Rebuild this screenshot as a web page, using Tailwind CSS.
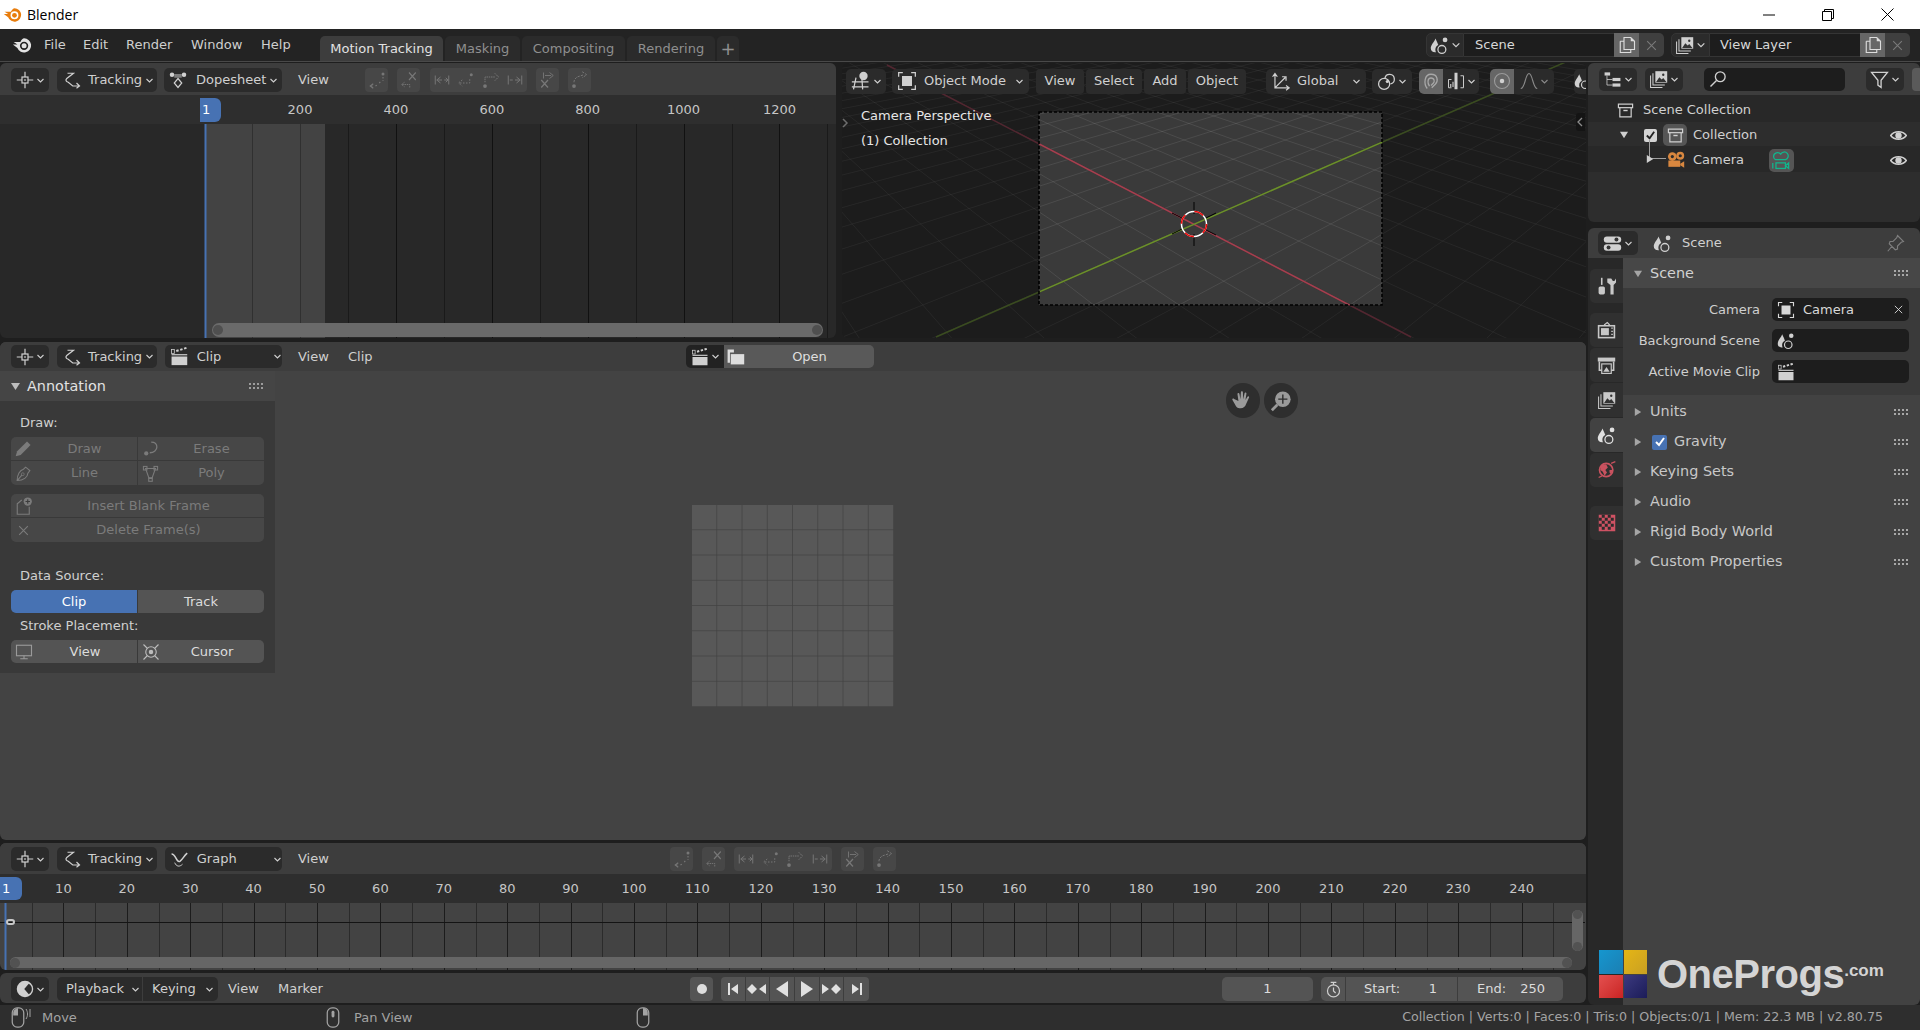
<!DOCTYPE html>
<html lang="en">
<head>
  <meta charset="UTF-8" />
  <title>Blender</title>
  <script src="https://cdn.jsdelivr.net/npm/@tailwindcss/browser@4"></script>
</head>
<body class="w-[1920px] h-[1030px] overflow-hidden flex flex-col bg-[#1e1e1e] text-[#d0d0d0] text-[13px] font-['DejaVu_Sans',sans-serif]">

  <!-- icon sheet -->
  <svg class="hidden" xmlns="http://www.w3.org/2000/svg">
    <symbol id="chev" viewBox="0 0 24 24"><path d="M4 8l8 8 8-8" fill="none" stroke="currentColor" stroke-width="3"/></symbol>
    <symbol id="blender" viewBox="0 0 24 24"><path fill-rule="evenodd" fill="currentColor" d="M14.5 4a8.5 8.5 0 1 1-8 11.5L1 11.5h5.5L2 8.5h8C11.5 5.5 13 4 14.5 4zM14.5 8a5 5 0 1 0 0 10 5 5 0 0 0 0-10z"/><circle cx="14.5" cy="13" r="3" fill="currentColor"/></symbol>
    <symbol id="clip-ed" viewBox="0 0 24 24"><g fill="none" stroke="currentColor" stroke-width="1.6"><rect x="8" y="8" width="8" height="8"/><path d="M12 1v7M12 16v7M1 12h7M16 12h7"/></g><rect x="11" y="11" width="2" height="2" fill="currentColor"/></symbol>
    <symbol id="tracking" viewBox="0 0 24 24"><path d="M6 3h8l-9 7c-2 2-1 4 2 5l6 5h8M18 16l4 4-4 3" fill="none" stroke="currentColor" stroke-width="1.6"/></symbol>
    <symbol id="dope" viewBox="0 0 24 24"><rect x="7" y="4" width="10" height="5" fill="currentColor" opacity=".5"/><circle cx="4" cy="5" r="3" fill="currentColor"/><circle cx="20" cy="5" r="3" fill="currentColor"/><path d="M12 10l5 6-5 6-5-6z" fill="none" stroke="currentColor" stroke-width="1.6"/></symbol>
    <symbol id="clapper" viewBox="0 0 24 24"><rect x="2" y="12" width="20" height="11" fill="currentColor"/><rect x="2" y="9" width="20" height="1.5" fill="currentColor"/><rect x="2" y="3" width="3.5" height="5" fill="none" stroke="currentColor"/><path d="M8 5l3-1M13 3.5l3-1M18 2l3-1" stroke="currentColor" stroke-width="2.5"/></symbol>
    <symbol id="graph" viewBox="0 0 24 24"><path d="M2 5c6 0 6 12 11 9 3-2 5-7 9-10" fill="none" stroke="currentColor" stroke-width="2"/><path d="M6 16c2 5 6 6 10 2" fill="none" stroke="currentColor" stroke-width="1.2"/></symbol>
    <symbol id="scene" viewBox="0 0 24 24"><path d="M7 3C5 8 1 11 1 15.5 1 19 4 21 7.5 20.5 6 17 7 13 10.5 11.5 10 9 8 6 7 3z" fill="currentColor"/><circle cx="19" cy="5" r="3" fill="currentColor"/><circle cx="15" cy="17" r="5" fill="none" stroke="currentColor" stroke-width="1.6"/></symbol>
    <symbol id="layer" viewBox="0 0 24 24"><path d="M2 7v15h15M5 4v15h15" fill="none" stroke="currentColor" stroke-width="1.3"/><rect x="8" y="1.5" width="15" height="14.5" fill="currentColor"/><path d="M9 15l4-6 3 3 2-2 4 5z" fill="#333"/><circle cx="18" cy="6" r="1.5" fill="#333"/></symbol>
    <symbol id="copy" viewBox="0 0 24 24"><path d="M3 7h5M3 7v15h14v-4M8 2v16h14V7l-5-5z" fill="none" stroke="currentColor" stroke-width="1.5"/><path d="M17 2v5h5z" fill="currentColor"/></symbol>
    <symbol id="x" viewBox="0 0 24 24"><path d="M4 4l16 16M20 4L4 20" fill="none" stroke="currentColor" stroke-width="2"/></symbol>
    <symbol id="box" viewBox="0 0 24 24"><g fill="none" stroke="currentColor" stroke-width="1.7"><rect x="2" y="3" width="20" height="5"/><path d="M4 8v13h16V8"/></g><rect x="9" y="11" width="6" height="2" fill="currentColor"/></symbol>
    <symbol id="eye" viewBox="0 0 24 24"><path d="M1 12C6 5 18 5 23 12 18 19 6 19 1 12z" fill="none" stroke="currentColor" stroke-width="2.2"/><circle cx="12" cy="12" r="4.5" fill="currentColor"/></symbol>
    <symbol id="camera" viewBox="0 0 24 24"><circle cx="8" cy="7" r="5.5" fill="currentColor"/><circle cx="18" cy="6" r="5" fill="currentColor"/><circle cx="8" cy="7" r="2" fill="#2b2b2b"/><circle cx="18" cy="6" r="2" fill="#2b2b2b"/><rect x="3" y="12" width="15" height="8" fill="currentColor"/><path d="M18 16l5-3v8l-5-3z" fill="currentColor"/></symbol>
    <symbol id="camera-line" viewBox="0 0 24 24"><g fill="none" stroke="currentColor" stroke-width="1.6"><path d="M2 7a5 5 0 0 1 9-3 5 5 0 1 1 6 7H6C4 11 2 9 2 7z"/><rect x="5" y="15" width="12" height="7"/><path d="M1 15v7M21 15l-4 3.5 4 3.5z"/></g></symbol>
    <symbol id="search" viewBox="0 0 24 24"><circle cx="15" cy="9" r="6.5" fill="none" stroke="currentColor" stroke-width="1.8"/><path d="M10 14l-8 8" stroke="currentColor" stroke-width="2"/></symbol>
    <symbol id="filter" viewBox="0 0 24 24"><path d="M2 3h20l-8 10v9l-4-3v-6z" fill="none" stroke="currentColor" stroke-width="1.7"/></symbol>
    <symbol id="tree" viewBox="0 0 24 24"><rect x="2" y="3" width="7" height="4" fill="currentColor"/><rect x="12" y="10" width="10" height="4" fill="currentColor"/><rect x="12" y="17" width="10" height="4" fill="currentColor"/><path d="M5 7v12h7M5 12h7" fill="none" stroke="currentColor"/></symbol>
    <symbol id="toggles" viewBox="0 0 24 24"><rect x="1" y="3" width="22" height="8" rx="4" fill="currentColor"/><rect x="1" y="13" width="22" height="8" rx="4" fill="currentColor"/><circle cx="17" cy="7" r="2.5" fill="#333"/><circle cx="7" cy="17" r="2.5" fill="#333"/></symbol>
    <symbol id="pin" viewBox="0 0 24 24"><path d="M14 2l8 8-3 1-5 5 0 4-3 1-8-8 1-3h4l5-5zM7 16l-6 7" fill="none" stroke="currentColor" stroke-width="1.5"/></symbol>
    <symbol id="grip" viewBox="0 0 15 7"><g fill="currentColor"><rect x="0" y="0" width="2" height="2"/><rect x="4" y="0" width="2" height="2"/><rect x="8" y="0" width="2" height="2"/><rect x="12" y="0" width="2" height="2"/><rect x="0" y="4" width="2" height="2"/><rect x="4" y="4" width="2" height="2"/><rect x="8" y="4" width="2" height="2"/><rect x="12" y="4" width="2" height="2"/></g></symbol>
    <symbol id="tool" viewBox="0 0 24 24"><path d="M6 1v9" stroke="currentColor" stroke-width="2"/><rect x="2" y="12" width="8" height="10" rx="2" fill="currentColor"/><path d="M13 2v5l4 3v12h4V10l3-3V2l-2 3h-2l-2-3z" fill="currentColor"/></symbol>
    <symbol id="render" viewBox="0 0 24 24"><path d="M9 5l4-3 3 3" fill="none" stroke="currentColor" stroke-width="1.5"/><rect x="2" y="6" width="20" height="15" fill="none" stroke="currentColor" stroke-width="2"/><rect x="5" y="9" width="10" height="9" fill="currentColor"/><path d="M18 9h2M18 13h2M18 17h2" stroke="currentColor" stroke-width="1.5"/></symbol>
    <symbol id="output" viewBox="0 0 24 24"><rect x="1" y="2" width="22" height="5" fill="currentColor"/><path d="M3 7v11h3M21 7v11h-3" fill="none" stroke="currentColor" stroke-width="2"/><rect x="6" y="10" width="12" height="12" fill="none" stroke="currentColor" stroke-width="1.5"/><path d="M8 20l4-6 4 6z" fill="currentColor"/></symbol>
    <symbol id="world" viewBox="0 0 24 24"><circle cx="11" cy="12" r="8" fill="none" stroke="currentColor" stroke-width="2"/><path d="M5 6l6-1 2 4-3 3 2 3-3 4-2-5-3-2zM15 12h4l-2 5-2-2z" fill="currentColor"/><path d="M2 21l4-2M17 4l5-2" fill="none" stroke="currentColor" stroke-width="1.5"/></symbol>
    <symbol id="checker" viewBox="0 0 24 24"><rect x="1" y="1" width="22" height="22" fill="currentColor"/><g fill="#2c2c2c"><rect x="5" y="1" width="4" height="4"/><rect x="13" y="1" width="4" height="4"/><rect x="1" y="5" width="4" height="4"/><rect x="9" y="5" width="4" height="4"/><rect x="17" y="5" width="4" height="4"/><rect x="5" y="9" width="4" height="4"/><rect x="13" y="9" width="4" height="4"/><rect x="1" y="13" width="4" height="4"/><rect x="9" y="13" width="4" height="4"/><rect x="17" y="13" width="4" height="4"/><rect x="5" y="17" width="4" height="4"/><rect x="13" y="17" width="4" height="4"/></g></symbol>
    <symbol id="obj" viewBox="0 0 24 24"><rect x="6" y="6" width="12" height="12" fill="currentColor"/><path d="M2 7V2h5M17 2h5v5M22 17v5h-5M7 22H2v-5" fill="none" stroke="currentColor" stroke-width="1.5"/></symbol>
    <symbol id="view3d" viewBox="0 0 24 24"><path d="M6 8L3 22M13 8l1 14M1 13h20M1 19h20" fill="none" stroke="currentColor" stroke-width="1.5"/><circle cx="15" cy="6" r="5" fill="currentColor"/></symbol>
    <symbol id="axes" viewBox="0 0 24 24"><path d="M5 3v17h17M5 20L18 7M2 6l3-4 3 4M19 17l4 3-4 3M14 6l5 0v5" fill="none" stroke="currentColor" stroke-width="1.5"/></symbol>
    <symbol id="link" viewBox="0 0 24 24"><circle cx="9" cy="15" r="7" fill="none" stroke="currentColor" stroke-width="1.6"/><path d="M10 8a6 6 0 1 1 7 7" fill="none" stroke="currentColor" stroke-width="1.6"/><circle cx="13" cy="12" r="2" fill="currentColor"/></symbol>
    <symbol id="magnet" viewBox="0 0 24 24"><path d="M7 22C2 16 3 3 12 3s10 9 6 13l-5 5M10 19c-3-4-3-11 2-11s5 5 3 7l-3 3" fill="none" stroke="currentColor" stroke-width="1.7"/></symbol>
    <symbol id="snap" viewBox="0 0 24 24"><path d="M6 10H2v11h4M18 5h4v16h-4" fill="none" stroke="currentColor" stroke-width="1.3"/><rect x="10" y="1" width="4" height="22" fill="currentColor"/><path d="M5 20v-4M8 20v-7" stroke="currentColor" stroke-width="1.5"/></symbol>
    <symbol id="prop" viewBox="0 0 24 24"><circle cx="12" cy="12" r="10" fill="none" stroke="currentColor" opacity=".5" stroke-width="1.5"/><circle cx="12" cy="12" r="3" fill="currentColor"/></symbol>
    <symbol id="falloff" viewBox="0 0 24 24"><path d="M1 22c6 0 6-20 11-20s5 20 11 20" fill="none" stroke="currentColor" stroke-width="1.5"/></symbol>
    <symbol id="pencil" viewBox="0 0 24 24"><path d="M17 2l5 5L8 21l-7 2 2-7z" fill="currentColor"/></symbol>
    <symbol id="erase" viewBox="0 0 24 24"><path d="M13 3c5 0 8 3 8 7s-4 8-10 8" fill="none" stroke="currentColor" stroke-width="1.8"/><circle cx="6" cy="19" r="3" fill="currentColor"/></symbol>
    <symbol id="nib" viewBox="0 0 24 24"><path d="M15 3l6 5-3 4c0 5-6 10-15 10C3 14 7 7 12 6zM3 22l7-8" fill="none" stroke="currentColor" stroke-width="1.5"/><circle cx="11" cy="13" r="2" fill="none" stroke="currentColor"/></symbol>
    <symbol id="poly" viewBox="0 0 24 24"><path d="M5 5h14l-5 14h-4z" fill="none" stroke="currentColor" stroke-width="1.5"/><g fill="none" stroke="currentColor" stroke-width="1.5"><rect x="2" y="2" width="5" height="5"/><rect x="17" y="2" width="5" height="5"/><rect x="9.5" y="18" width="5" height="5"/></g></symbol>
    <symbol id="blank" viewBox="0 0 24 24"><path d="M9 4l-6 5v14h16V13" fill="none" stroke="currentColor" stroke-width="1.5"/><circle cx="17" cy="6" r="5.5" fill="currentColor"/><path d="M17 3v6M14 6h6" stroke="#3c3c3c" stroke-width="1.5"/></symbol>
    <symbol id="monitor" viewBox="0 0 24 24"><rect x="2" y="3" width="20" height="14" fill="none" stroke="currentColor" stroke-width="1.5"/><path d="M7 21h10M12 17v4" stroke="currentColor" stroke-width="1.5"/></symbol>
    <symbol id="cursor3d" viewBox="0 0 24 24"><circle cx="12" cy="12" r="7" fill="none" stroke="currentColor" stroke-width="1.5"/><circle cx="12" cy="12" r="3" fill="currentColor"/><path d="M2 2l5 5M22 2l-5 5M2 22l5-5M22 22l-5-5" stroke="currentColor" stroke-width="1.5"/></symbol>
    <symbol id="t-back" viewBox="0 0 24 24"><g stroke="currentColor" fill="none" stroke-width="1.5"><path d="M7 17l-4 3 4 3" /><path d="M4 20h3M10 20l3-2M15 16l2-2" stroke-dasharray="2 2"/></g><circle cx="20" cy="4" r="2" fill="currentColor"/><path d="M20 8v5" stroke="currentColor" stroke-width="1.5" stroke-dasharray="2 2"/></symbol>
    <symbol id="t-xback" viewBox="0 0 24 24"><path d="M12 2l9 10M21 2l-9 10" stroke="currentColor" stroke-width="1.5"/><path d="M6 15l-4 3 4 3M3 18h10v5" fill="none" stroke="currentColor" stroke-width="1.2" stroke-dasharray="2 1"/></symbol>
    <symbol id="t-first" viewBox="0 0 24 24"><path d="M3 6v12M10 8l-5 4 5 4M6 12h6M15 12h4M21 6v12M17 9l3 3-3 3" fill="none" stroke="currentColor" stroke-width="1.3"/></symbol>
    <symbol id="t-prev" viewBox="0 0 24 24"><path d="M7 12l-5 4 5 4M4 16h13v-7" fill="none" stroke="currentColor" stroke-width="1.3" stroke-dasharray="2 2"/><circle cx="19" cy="5" r="2" fill="currentColor"/></symbol>
    <symbol id="t-next" viewBox="0 0 24 24"><circle cx="4" cy="20" r="2.5" fill="currentColor"/><path d="M4 15V8h14M17 3l5 5-5 5" fill="none" stroke="currentColor" stroke-width="1.3" stroke-dasharray="2 1"/></symbol>
    <symbol id="t-last" viewBox="0 0 24 24"><path d="M21 6v12M14 8l5 4-5 4M18 12H12M9 12H5M3 6v12" fill="none" stroke="currentColor" stroke-width="1.3"/></symbol>
    <symbol id="t-xfwd" viewBox="0 0 24 24"><path d="M3 12l9 10M12 12L3 22" stroke="currentColor" stroke-width="1.7"/><path d="M6 2v8M8 6h8M14 2l5 4-5 4" fill="none" stroke="currentColor" stroke-width="1.2"/></symbol>
    <symbol id="t-fwd" viewBox="0 0 24 24"><circle cx="4" cy="20" r="2.5" fill="currentColor"/><path d="M4 15c0-4 3-7 7-8l6-2M15 1l6 4-6 4" fill="none" stroke="currentColor" stroke-width="1.3" stroke-dasharray="3 1.5"/></symbol>
    <symbol id="clock" viewBox="0 0 24 24"><path fill-rule="evenodd" fill="currentColor" d="M12 1a11 11 0 1 0 0 22 11 11 0 0 0 0-22zM17 5l-6 7 6 7a8 8 0 0 0 0-14z"/></symbol>
    <symbol id="watch" viewBox="0 0 24 24"><circle cx="12" cy="14" r="8.5" fill="none" stroke="currentColor" stroke-width="1.7"/><path d="M8 2h8M12 2v4M12 9v5l3 3" fill="none" stroke="currentColor" stroke-width="1.7"/></symbol>
    <symbol id="folder" viewBox="0 0 24 24"><path d="M2 3h8v4h-8zM2 7v13h3V7" fill="currentColor"/><rect x="6" y="9" width="17" height="13" fill="currentColor"/></symbol>
    <symbol id="hand" viewBox="0 0 24 24"><path d="M7 12L6 4.500c0-1.500 2-1.500 2.200 0l1 5.500.5-7.500c0-1.500 2.200-1.500 2.200 0l.4 7.500 1.400-6.500c.3-1.500 2.300-1 2 .5l-1 7 2-3.500c.8-1.300 2.500-.3 1.800 1l-3 6.500c-1 3-3 5-6 5-4 0-5-2-6-4l-3-5c-.7-1.200.8-2.500 1.800-1.300z" fill="currentColor"/></symbol>
    <symbol id="zoomin" viewBox="0 0 24 24"><circle cx="14" cy="10" r="8.5" fill="currentColor"/><path d="M8 16l-6 6" stroke="currentColor" stroke-width="3"/><path d="M14 5v10M9 10h10" stroke="#2c2c2c" stroke-width="1.5"/></symbol>
    <symbol id="mouse-l" viewBox="0 0 14 24"><rect x="1" y="2" width="12" height="20" rx="5" fill="none" stroke="currentColor" stroke-width="1.3"/><path d="M2 7c0-3 2-4 5-5v8H2z" fill="currentColor"/></symbol>
    <symbol id="mouse-m" viewBox="0 0 14 24"><rect x="1" y="2" width="12" height="20" rx="5" fill="none" stroke="currentColor" stroke-width="1.3"/><rect x="5.5" y="5" width="3" height="7" rx="1.5" fill="currentColor"/></symbol>
    <symbol id="mouse-r" viewBox="0 0 14 24"><rect x="1" y="2" width="12" height="20" rx="5" fill="none" stroke="currentColor" stroke-width="1.3"/><path d="M7 2c3 0 5 2 5 5v3H7z" fill="currentColor"/></symbol>
  </svg>

  <!-- window title -->
  <div class="h-[29px] shrink-0 bg-white flex items-center text-black font-['Open_Sans',sans-serif] text-[14px]">
    <svg class="w-[19px] h-[19px] ml-[3px] text-[#e87d0d]"><use href="#blender"/></svg>
    <span class="ml-[5px]">Blender</span>
    <div class="ml-auto flex items-center">
      <svg class="w-[12px] h-[12px] mr-[47px]" viewBox="0 0 12 12"><path d="M0 6h12" stroke="#000"/></svg>
      <svg class="w-[12px] h-[12px] mr-[47px]" viewBox="0 0 12 12"><path d="M.5 2.5h9v9h-9zM2.5 2.5v-2h9v9h-2" fill="none" stroke="#000"/></svg>
      <svg class="w-[13px] h-[13px] mr-[26px]" viewBox="0 0 13 13"><path d="M.5.5l12 12M12.5.5l-12 12" stroke="#000"/></svg>
    </div>
  </div>

  <!-- top bar -->
  <div class="h-[33px] shrink-0 bg-[#232323] border-b border-[#494949] flex text-[#cfcfcf]">
    <div class="w-[37px] flex items-center justify-center pl-[6px]"><svg class="w-[20px] h-[20px] text-[#e4e4e4]"><use href="#blender"/></svg></div>
    <div class="w-[7px]"></div>
    <div class="flex items-center">
      <span class="w-[39px]">File</span><span class="w-[43px]">Edit</span><span class="w-[65px]">Render</span><span class="w-[70px]">Window</span><span class="w-[59px]">Help</span>
    </div>
    <div class="flex items-end gap-[2px]">
      <div class="w-[123px] h-[25px] rounded-t-[5px] bg-[#3d3d3d] text-[#e2e2e2] flex items-center justify-center">Motion Tracking</div>
      <div class="w-[75px] h-[25px] rounded-t-[5px] bg-[#2b2b2b] text-[#8f8f8f] flex items-center justify-center">Masking</div>
      <div class="w-[103px] h-[25px] rounded-t-[5px] bg-[#2b2b2b] text-[#8f8f8f] flex items-center justify-center">Compositing</div>
      <div class="w-[88px] h-[25px] rounded-t-[5px] bg-[#2b2b2b] text-[#8f8f8f] flex items-center justify-center">Rendering</div>
      <div class="w-[22px] h-[25px] rounded-t-[5px] bg-[#2b2b2b] text-[#8f8f8f] text-[18px] flex items-center justify-center">+</div>
    </div>
    <div class="flex items-start pt-[4px] ml-[687px]">
      <div class="w-[38px] h-[24px] rounded-l-[5px] bg-[#2b2b2b] border border-[#353535] flex items-center justify-center gap-[2px]"><svg class="w-[19px] h-[19px]"><use href="#scene"/></svg><svg class="w-[10px] h-[10px]"><use href="#chev"/></svg></div>
      <div class="w-[150px] h-[24px] bg-[#1d1d1d] border-y border-[#353535] flex items-center pl-[11px] text-[#d8d8d8]">Scene</div>
      <div class="w-[25px] h-[24px] bg-[#666666] flex items-center justify-center"><svg class="w-[18px] h-[18px] text-[#dddddd]"><use href="#copy"/></svg></div>
      <div class="w-[25px] h-[24px] rounded-r-[5px] bg-[#3f3f3f] flex items-center justify-center"><svg class="w-[13px] h-[13px] text-[#7a7a7a]"><use href="#x"/></svg></div>
      <div class="w-[39px] h-[24px] ml-[7px] rounded-l-[5px] bg-[#2b2b2b] border border-[#353535] flex items-center justify-center gap-[2px]"><svg class="w-[19px] h-[19px]"><use href="#layer"/></svg><svg class="w-[10px] h-[10px]"><use href="#chev"/></svg></div>
      <div class="w-[150px] h-[24px] bg-[#1d1d1d] border-y border-[#353535] flex items-center pl-[10px] text-[#d8d8d8]">View Layer</div>
      <div class="w-[25px] h-[24px] bg-[#666666] flex items-center justify-center"><svg class="w-[18px] h-[18px] text-[#dddddd]"><use href="#copy"/></svg></div>
      <div class="w-[25px] h-[24px] rounded-r-[5px] bg-[#3f3f3f] flex items-center justify-center"><svg class="w-[13px] h-[13px] text-[#7a7a7a]"><use href="#x"/></svg></div>
    </div>
  </div>

  <div class="flex h-[943px] shrink-0">
    <!-- left column -->
    <div class="w-[1587px] shrink-0 flex flex-col pt-px pr-px">
      <div class="flex h-[275px] shrink-0">
        <!-- dopesheet -->
        <section class="w-[836px] flex flex-col rounded-[6px] overflow-hidden relative bg-[#282828]">
          <div class="h-[32px] shrink-0 bg-[#3d3d3d] flex items-center pl-[11px] pt-[2px]">
            <div class="w-[38px] h-[24px] rounded-[5px] bg-[#2b2b2b] flex items-center justify-center gap-[2px]"><svg class="w-[18px] h-[18px]"><use href="#clip-ed"/></svg><svg class="w-[9px] h-[9px]"><use href="#chev"/></svg></div>
            <div class="w-[100px] h-[24px] ml-[8px] rounded-[5px] bg-[#2b2b2b] flex items-center pl-[6px] gap-[7px]"><svg class="w-[18px] h-[18px]"><use href="#tracking"/></svg><span>Tracking</span><svg class="w-[9px] h-[9px] -ml-[4px]"><use href="#chev"/></svg></div>
            <div class="w-[118px] h-[24px] ml-[7px] rounded-[5px] bg-[#2b2b2b] flex items-center pl-[5px] gap-[9px]"><svg class="w-[18px] h-[18px]"><use href="#dope"/></svg><span>Dopesheet</span><svg class="w-[9px] h-[9px] -ml-[6px]"><use href="#chev"/></svg></div>
            <span class="ml-[16px] w-[67px]">View</span>
            <div class="w-[23px] h-[24px] rounded-[4px] bg-[#474747] text-[#777777] flex items-center justify-center"><svg class="w-[18px] h-[18px]"><use href="#t-back"/></svg></div>
            <div class="w-[23px] h-[24px] ml-[9px] rounded-[4px] bg-[#474747] text-[#777777] flex items-center justify-center"><svg class="w-[18px] h-[18px]"><use href="#t-xback"/></svg></div>
            <div class="w-[97px] h-[24px] ml-[10px] rounded-[4px] bg-[#474747] text-[#777777] flex items-center justify-around"><svg class="w-[18px] h-[18px]"><use href="#t-first"/></svg><svg class="w-[18px] h-[18px]"><use href="#t-prev"/></svg><svg class="w-[18px] h-[18px]"><use href="#t-next"/></svg><svg class="w-[18px] h-[18px]"><use href="#t-last"/></svg></div>
            <div class="w-[23px] h-[24px] ml-[9px] rounded-[4px] bg-[#474747] text-[#777777] flex items-center justify-center"><svg class="w-[18px] h-[18px]"><use href="#t-xfwd"/></svg></div>
            <div class="w-[23px] h-[24px] ml-[9px] rounded-[4px] bg-[#474747] text-[#777777] flex items-center justify-center"><svg class="w-[18px] h-[18px]"><use href="#t-fwd"/></svg></div>
          </div>
          <div id="dope-ruler" class="h-[29px] shrink-0 relative bg-[#2e2e2e]"></div>
          <div class="flex-1 relative">
            <svg id="dope-lines" class="absolute inset-0 w-full h-full"></svg>
            <div class="absolute left-[212px] right-[13px] top-[199px] h-[14px] rounded-full bg-[#6a6a6a] flex items-center justify-between px-[1px]"><span class="w-[10px] h-[10px] rounded-full bg-[#4f4f4f]"></span><span class="w-[10px] h-[10px] rounded-full bg-[#4f4f4f]"></span></div>
          </div>
          <div class="absolute left-[200px] top-[35px] w-[21px] h-[24px] rounded-r-[6px] bg-[#4772b3] text-white pl-[2px] leading-[24px]">1</div>
        </section>

        <!-- 3d viewport -->
        <section class="ml-[6px] w-[744px] relative rounded-[6px] overflow-hidden bg-[#1c1c1c]">
          <svg id="scene3d" class="absolute inset-0 w-full h-full" viewBox="842 63 744 275">
            <defs><clipPath id="frame-clip"><rect x="1039" y="112" width="343" height="193"/></clipPath></defs>
            <g id="grid-out" stroke="#ffffff" stroke-opacity=".05"></g>
            <rect x="1039" y="112" width="343" height="193" fill="#3a3a3a"/>
            <g id="grid-in" clip-path="url(#frame-clip)" stroke="#ffffff" stroke-opacity=".09"></g>
            <path d="M887 65L1411 337" stroke="#532630" stroke-width="1.5"/>
            <path d="M936 337L1600 47" stroke="#3a4c20" stroke-width="1.5"/>
            <g clip-path="url(#frame-clip)">
              <path d="M887 65L1411 337" stroke="#a5404f" stroke-width="1.5"/>
              <path d="M936 337L1600 47" stroke="#6c8f2c" stroke-width="1.5"/>
            </g>
            <rect x="1039" y="112" width="343" height="193" fill="none" stroke="#000" stroke-dasharray="3 2" stroke-width="1.6"/>
            <path d="M1194 202v12M1194 234v12M1172 234l10-5M1206 218l10-5M1172 213l10 5M1206 230l10 5" stroke="#000" stroke-width="1"/>
            <circle cx="1194" cy="224" r="12.5" fill="none" stroke="#ffffff" stroke-width="1.5"/>
            <circle cx="1194" cy="224" r="12.5" fill="none" stroke="#ee0a0a" stroke-width="1.5" stroke-dasharray="9.82 9.82"/>
          </svg>
          <div class="absolute inset-x-0 top-0 h-[32px] flex items-center pl-[4px] pt-[4px] overflow-hidden">
            <div class="w-[40px] h-[25px] rounded-[5px] bg-[#2b2b2b] flex items-center justify-center gap-[2px] shrink-0"><svg class="w-[20px] h-[20px]"><use href="#view3d"/></svg><svg class="w-[9px] h-[9px]"><use href="#chev"/></svg></div>
            <div class="w-[137px] h-[25px] ml-[6px] rounded-[5px] bg-[#2b2b2b] flex items-center pl-[5px] gap-[7px] shrink-0"><svg class="w-[20px] h-[20px] shrink-0"><use href="#obj"/></svg><span class="whitespace-nowrap">Object Mode</span><svg class="w-[9px] h-[9px] ml-auto mr-[5px] shrink-0"><use href="#chev"/></svg></div>
            <div class="w-[48px] h-[25px] ml-[7px] rounded-[4px] bg-[#2b2b2b] flex items-center justify-center shrink-0">View</div>
            <div class="w-[56px] h-[25px] ml-[2px] rounded-[4px] bg-[#2b2b2b] flex items-center justify-center shrink-0">Select</div>
            <div class="w-[42px] h-[25px] ml-[2px] rounded-[4px] bg-[#2b2b2b] flex items-center justify-center shrink-0">Add</div>
            <div class="w-[58px] h-[25px] ml-[2px] rounded-[4px] bg-[#2b2b2b] flex items-center justify-center shrink-0">Object</div>
            <div class="w-[100px] h-[25px] ml-[20px] rounded-[5px] bg-[#2b2b2b] flex items-center pl-[5px] gap-[7px] shrink-0"><svg class="w-[19px] h-[19px]"><use href="#axes"/></svg><span>Global</span><svg class="w-[9px] h-[9px] ml-auto mr-[5px]"><use href="#chev"/></svg></div>
            <div class="w-[40px] h-[25px] ml-[6px] rounded-[5px] bg-[#2b2b2b] flex items-center justify-center gap-[2px] shrink-0"><svg class="w-[19px] h-[19px]"><use href="#link"/></svg><svg class="w-[9px] h-[9px]"><use href="#chev"/></svg></div>
            <div class="w-[24px] h-[25px] ml-[7px] rounded-l-[5px] bg-[#666666] text-[#a8a8a8] flex items-center justify-center shrink-0"><svg class="w-[18px] h-[18px]"><use href="#magnet"/></svg></div>
            <div class="w-[36px] h-[25px] rounded-r-[5px] bg-[#2b2b2b] flex items-center justify-center gap-[2px] shrink-0"><svg class="w-[18px] h-[18px]"><use href="#snap"/></svg><svg class="w-[9px] h-[9px]"><use href="#chev"/></svg></div>
            <div class="w-[24px] h-[25px] ml-[11px] rounded-l-[5px] bg-[#666666] flex items-center justify-center shrink-0"><svg class="w-[18px] h-[18px]"><use href="#prop"/></svg></div>
            <div class="w-[40px] h-[25px] rounded-r-[5px] bg-[#2b2b2b] flex items-center justify-center gap-[2px] shrink-0"><svg class="w-[18px] h-[18px] text-[#8a8a8a]"><use href="#falloff"/></svg><svg class="w-[9px] h-[9px] text-[#8a8a8a]"><use href="#chev"/></svg></div>
            <div class="w-[20px] h-[25px] ml-[20px] rounded-l-[5px] bg-[#2b2b2b] shrink-0 flex items-center"><svg class="w-[18px] h-[18px]"><use href="#scene"/></svg></div>
          </div>
          <div class="absolute left-[19px] top-[40px] leading-[25px] text-[#e6e6e6]">
            <p>Camera Perspective</p>
            <p>(1) Collection</p>
          </div>
          <svg class="absolute left-[-4px] top-[53px] w-[14px] h-[14px] text-[#6d6d6d]" viewBox="0 0 14 14"><path d="M5 3l4 4-4 4" fill="none" stroke="currentColor" stroke-width="1.5"/></svg>
          <div class="absolute right-[1px] top-[50px] w-[9px] h-[18px] rounded-l-[3px] bg-[#141414] flex items-center justify-center"><svg class="w-[9px] h-[12px] text-[#8c8c8c]" viewBox="0 0 9 12"><path d="M6 2L2 6l4 4" fill="none" stroke="currentColor" stroke-width="1.3"/></svg></div>
        </section>
      </div>

      <!-- movie clip editor -->
      <section class="mt-[4px] h-[498px] shrink-0 rounded-[6px] overflow-hidden flex flex-col bg-[#434343]">
        <div class="h-[29px] shrink-0 bg-[#3d3d3d] flex items-center pl-[11px]">
          <div class="w-[38px] h-[23px] rounded-[5px] bg-[#2b2b2b] flex items-center justify-center gap-[2px]"><svg class="w-[18px] h-[18px]"><use href="#clip-ed"/></svg><svg class="w-[9px] h-[9px]"><use href="#chev"/></svg></div>
          <div class="w-[100px] h-[23px] ml-[8px] rounded-[5px] bg-[#2b2b2b] flex items-center pl-[6px] gap-[7px]"><svg class="w-[18px] h-[18px]"><use href="#tracking"/></svg><span>Tracking</span><svg class="w-[9px] h-[9px] -ml-[4px]"><use href="#chev"/></svg></div>
          <div class="w-[117px] h-[23px] ml-[8px] rounded-[5px] bg-[#2b2b2b] flex items-center pl-[5px] gap-[8px]"><svg class="w-[19px] h-[19px]"><use href="#clapper"/></svg><span class="w-[69px]">Clip</span><svg class="w-[9px] h-[9px]"><use href="#chev"/></svg></div>
          <span class="ml-[16px] w-[50px]">View</span>
          <span class="w-[338px]">Clip</span>
          <div class="w-[38px] h-[23px] rounded-l-[5px] bg-[#222222] flex items-center justify-center gap-[2px]"><svg class="w-[18px] h-[18px]"><use href="#clapper"/></svg><svg class="w-[9px] h-[9px]"><use href="#chev"/></svg></div>
          <div class="w-[150px] h-[23px] rounded-r-[5px] bg-[#595959] flex items-center pl-[2px] text-[#dedede]"><svg class="w-[19px] h-[19px]"><use href="#folder"/></svg><span class="flex-1 text-center">Open</span></div>
        </div>
        <div class="flex-1 relative">
          <aside class="w-[275px]">
            <div class="h-[30px] bg-[#454545] flex items-center pl-[11px] pr-[11px] pt-px text-[14.4px] text-[#e2e2e2]">
              <svg class="w-[9px] h-[9px] text-[#bdbdbd]" viewBox="0 0 10 10"><path d="M0 1h10L5 9z" fill="currentColor"/></svg>
              <span class="ml-[7px]">Annotation</span>
              <svg class="ml-auto w-[15px] h-[7px] text-[#9c9c9c]"><use href="#grip"/></svg>
            </div>
            <div class="h-[272px] bg-[#393939] pl-[11px] pr-[11px] pt-[14px]">
              <p class="pl-[9px] h-[22px] leading-[16px]">Draw:</p>
              <div class="grid grid-cols-2 gap-px rounded-[5px] overflow-hidden text-[#7b7b7b] text-center">
                <div class="h-[23px] bg-[#474747] flex items-center pl-[4px]"><svg class="w-[17px] h-[17px]"><use href="#pencil"/></svg><span class="flex-1">Draw</span></div>
                <div class="h-[23px] bg-[#474747] flex items-center pl-[4px]"><svg class="w-[17px] h-[17px]"><use href="#erase"/></svg><span class="flex-1">Erase</span></div>
                <div class="h-[24px] bg-[#474747] flex items-center pl-[4px]"><svg class="w-[17px] h-[17px]"><use href="#nib"/></svg><span class="flex-1">Line</span></div>
                <div class="h-[24px] bg-[#474747] flex items-center pl-[4px]"><svg class="w-[17px] h-[17px]"><use href="#poly"/></svg><span class="flex-1">Poly</span></div>
              </div>
              <div class="mt-[9px] flex flex-col gap-px rounded-[5px] overflow-hidden text-[#7b7b7b] text-center">
                <div class="h-[23px] bg-[#474747] flex items-center pl-[4px]"><svg class="w-[18px] h-[18px]"><use href="#blank"/></svg><span class="flex-1">Insert Blank Frame</span></div>
                <div class="h-[24px] bg-[#474747] flex items-center pl-[4px]"><svg class="w-[13px] h-[13px] ml-[2px] mr-[3px]"><use href="#x"/></svg><span class="flex-1">Delete Frame(s)</span></div>
              </div>
              <p class="pl-[9px] mt-[26px] h-[22px] leading-[16px]">Data Source:</p>
              <div class="grid grid-cols-2 gap-px rounded-[5px] overflow-hidden text-center">
                <div class="h-[23px] bg-[#4772b3] text-white leading-[23px]">Clip</div>
                <div class="h-[23px] bg-[#545454] text-[#dcdcdc] leading-[23px]">Track</div>
              </div>
              <p class="pl-[9px] mt-[5px] h-[22px] leading-[16px]">Stroke Placement:</p>
              <div class="grid grid-cols-2 gap-px rounded-[5px] overflow-hidden text-center">
                <div class="h-[23px] bg-[#545454] text-[#dcdcdc] flex items-center pl-[4px]"><svg class="w-[18px] h-[18px] text-[#9a9a9a]"><use href="#monitor"/></svg><span class="flex-1">View</span></div>
                <div class="h-[23px] bg-[#545454] text-[#dcdcdc] flex items-center pl-[4px]"><svg class="w-[18px] h-[18px] text-[#bcbcbc]"><use href="#cursor3d"/></svg><span class="flex-1">Cursor</span></div>
              </div>
            </div>
          </aside>
          <!-- empty clip canvas -->
          <svg class="absolute left-[692px] top-[134px] w-[202px] h-[202px]" viewBox="0 0 202 202">
            <defs><pattern id="clip-cell" width="25.25" height="25.25" patternUnits="userSpaceOnUse"><rect width="25.25" height="25.25" fill="#585858"/><path d="M25.25 0v25.25M0 25.25h25.25" stroke="#424242" stroke-width="1.5"/></pattern></defs>
            <rect width="202" height="202" fill="url(#clip-cell)"/>
          </svg>
          <div class="absolute left-[1226px] top-[12px] w-[34px] h-[35px] rounded-full bg-[#2e2e2e] flex items-center justify-center text-[#9a9a9a]"><svg class="w-[22px] h-[22px]"><use href="#hand"/></svg></div>
          <div class="absolute left-[1264px] top-[12px] w-[34px] h-[35px] rounded-full bg-[#2e2e2e] flex items-center justify-center text-[#9a9a9a]"><svg class="w-[22px] h-[22px]"><use href="#zoomin"/></svg></div>
        </div>
      </section>

      <!-- graph -->
      <section class="mt-[3px] h-[127px] shrink-0 rounded-[6px] overflow-hidden flex flex-col relative bg-[#434343]">
        <div class="h-[31px] shrink-0 bg-[#3d3d3d] flex items-center pl-[11px] pt-px">
          <div class="w-[38px] h-[24px] rounded-[5px] bg-[#2b2b2b] flex items-center justify-center gap-[2px]"><svg class="w-[18px] h-[18px]"><use href="#clip-ed"/></svg><svg class="w-[9px] h-[9px]"><use href="#chev"/></svg></div>
          <div class="w-[100px] h-[24px] ml-[8px] rounded-[5px] bg-[#2b2b2b] flex items-center pl-[6px] gap-[7px]"><svg class="w-[18px] h-[18px]"><use href="#tracking"/></svg><span>Tracking</span><svg class="w-[9px] h-[9px] -ml-[4px]"><use href="#chev"/></svg></div>
          <div class="w-[117px] h-[24px] ml-[8px] rounded-[5px] bg-[#2b2b2b] flex items-center pl-[5px] gap-[8px]"><svg class="w-[19px] h-[19px]"><use href="#graph"/></svg><span class="w-[69px]">Graph</span><svg class="w-[9px] h-[9px]"><use href="#chev"/></svg></div>
          <span class="ml-[16px] w-[372px]">View</span>
          <div class="w-[23px] h-[24px] rounded-[4px] bg-[#474747] text-[#777777] flex items-center justify-center"><svg class="w-[18px] h-[18px]"><use href="#t-back"/></svg></div>
          <div class="w-[23px] h-[24px] ml-[9px] rounded-[4px] bg-[#474747] text-[#777777] flex items-center justify-center"><svg class="w-[18px] h-[18px]"><use href="#t-xback"/></svg></div>
          <div class="w-[98px] h-[24px] ml-[9px] rounded-[4px] bg-[#474747] text-[#777777] flex items-center justify-around"><svg class="w-[18px] h-[18px]"><use href="#t-first"/></svg><svg class="w-[18px] h-[18px]"><use href="#t-prev"/></svg><svg class="w-[18px] h-[18px]"><use href="#t-next"/></svg><svg class="w-[18px] h-[18px]"><use href="#t-last"/></svg></div>
          <div class="w-[23px] h-[24px] ml-[9px] rounded-[4px] bg-[#474747] text-[#777777] flex items-center justify-center"><svg class="w-[18px] h-[18px]"><use href="#t-xfwd"/></svg></div>
          <div class="w-[23px] h-[24px] ml-[9px] rounded-[4px] bg-[#474747] text-[#777777] flex items-center justify-center"><svg class="w-[18px] h-[18px]"><use href="#t-fwd"/></svg></div>
        </div>
        <div id="graph-ruler" class="h-[29px] shrink-0 relative bg-[#2e2e2e]"></div>
        <div class="flex-1 relative">
          <svg id="graph-lines" class="absolute inset-0 w-full h-full"></svg>
          <div class="absolute left-[6px] top-[16px] w-[9px] h-[6px] rounded-full border-2 border-[#c8c8c8]"></div>
          <div class="absolute left-[10px] right-[14px] top-[54px] h-[11px] rounded-full bg-[#666666] flex items-center justify-between"><span class="w-[10px] h-[10px] rounded-full bg-[#525252]"></span><span class="w-[10px] h-[10px] rounded-full bg-[#525252]"></span></div>
          <div class="absolute left-[1572px] top-[7px] w-[11px] h-[41px] rounded-full bg-[#666666] flex flex-col items-center justify-between"><span class="w-[9px] h-[9px] rounded-full bg-[#525252]"></span><span class="w-[9px] h-[9px] rounded-full bg-[#525252]"></span></div>
        </div>
        <div class="absolute left-0 top-[34px] w-[22px] h-[23px] rounded-r-[6px] bg-[#4772b3] text-white pl-[2px] leading-[23px]">1</div>
      </section>

      <!-- timeline -->
      <section class="mt-[3px] h-[30px] shrink-0 rounded-[6px] bg-[#3d3d3d] flex items-center pl-[11px] pt-[2px]">
        <div class="w-[38px] h-[24px] rounded-[5px] bg-[#2b2b2b] flex items-center justify-center gap-[2px]"><svg class="w-[18px] h-[18px]"><use href="#clock"/></svg><svg class="w-[9px] h-[9px]"><use href="#chev"/></svg></div>
        <div class="w-[161px] h-[24px] ml-[8px] rounded-[5px] bg-[#2b2b2b] flex items-center">
          <div class="w-[86px] border-r border-[#3d3d3d] h-full flex items-center pl-[9px] gap-[7px]"><span>Playback</span><svg class="w-[9px] h-[9px]"><use href="#chev"/></svg></div>
          <div class="flex-1 flex items-center pl-[9px] gap-[9px]"><span>Keying</span><svg class="w-[9px] h-[9px]"><use href="#chev"/></svg></div>
        </div>
        <span class="ml-[10px] w-[50px]">View</span>
        <span class="w-[412px]">Marker</span>
        <div class="w-[23px] h-[24px] rounded-[4px] bg-[#545454] flex items-center justify-center"><span class="w-[10px] h-[10px] rounded-full bg-[#dddddd]"></span></div>
        <div class="w-[148px] h-[24px] ml-[8px] rounded-[4px] bg-[#545454] grid grid-cols-6 divide-x divide-[#3d3d3d] text-[#e0e0e0]">
          <div class="flex items-center justify-center"><svg class="w-[14px] h-[14px]" viewBox="0 0 14 14"><path d="M2 1h2v12H2zM12 2v10L5 7z" fill="currentColor"/></svg></div>
          <div class="flex items-center justify-center"><svg class="w-[20px] h-[14px]" viewBox="0 0 20 14"><path d="M5 2l5 5-5 5-5-5zM19 2v10l-7-5z" fill="currentColor"/></svg></div>
          <div class="flex items-center justify-center"><svg class="w-[14px] h-[16px]" viewBox="0 0 14 16"><path d="M13 0v16L1 8z" fill="currentColor"/></svg></div>
          <div class="flex items-center justify-center"><svg class="w-[14px] h-[16px]" viewBox="0 0 14 16"><path d="M1 0v16l12-8z" fill="currentColor"/></svg></div>
          <div class="flex items-center justify-center"><svg class="w-[20px] h-[14px]" viewBox="0 0 20 14"><path d="M1 2v10l7-5zM15 2l5 5-5 5-5-5z" fill="currentColor"/></svg></div>
          <div class="flex items-center justify-center"><svg class="w-[14px] h-[14px]" viewBox="0 0 14 14"><path d="M10 1h2v12h-2zM2 2v10l7-5z" fill="currentColor"/></svg></div>
        </div>
        <div class="w-[91px] h-[24px] ml-[353px] rounded-[5px] bg-[#545454] text-[#dcdcdc] flex items-center justify-center">1</div>
        <div class="w-[24px] h-[24px] ml-[8px] rounded-l-[5px] bg-[#545454] flex items-center justify-center"><svg class="w-[17px] h-[17px]"><use href="#watch"/></svg></div>
        <div class="w-[111px] h-[24px] ml-px bg-[#545454] text-[#dcdcdc] flex items-center justify-between pl-[18px] pr-[20px]"><span>Start:</span><span>1</span></div>
        <div class="w-[105px] h-[24px] ml-px rounded-r-[5px] bg-[#545454] text-[#dcdcdc] flex items-center justify-between pl-[19px] pr-[18px]"><span>End:</span><span>250</span></div>
      </section>
    </div>

    <!-- right column -->
    <div class="flex-1 flex flex-col pt-px pl-px">
      <!-- outliner -->
      <section class="h-[159px] shrink-0 rounded-[6px] overflow-hidden bg-[#2d2d2d] flex flex-col">
        <div class="h-[32px] shrink-0 bg-[#3d3d3d] flex items-center pl-[11px]">
          <div class="w-[38px] h-[23px] rounded-[5px] bg-[#2b2b2b] flex items-center justify-center gap-[2px]"><svg class="w-[19px] h-[19px]"><use href="#tree"/></svg><svg class="w-[9px] h-[9px]"><use href="#chev"/></svg></div>
          <div class="w-[38px] h-[23px] ml-[8px] rounded-[5px] bg-[#2b2b2b] flex items-center justify-center gap-[2px]"><svg class="w-[19px] h-[19px]"><use href="#layer"/></svg><svg class="w-[9px] h-[9px]"><use href="#chev"/></svg></div>
          <div class="w-[141px] h-[23px] ml-[21px] rounded-[5px] bg-[#1d1d1d] flex items-center pl-[5px]"><svg class="w-[18px] h-[18px]"><use href="#search"/></svg></div>
          <div class="w-[38px] h-[23px] ml-[21px] rounded-[5px] bg-[#2b2b2b] flex items-center justify-center gap-[2px]"><svg class="w-[19px] h-[19px]"><use href="#filter"/></svg><svg class="w-[9px] h-[9px]"><use href="#chev"/></svg></div>
          <div class="w-[8px] h-[23px] ml-[8px] rounded-l-[4px] bg-[#5a5a5a]"></div>
        </div>
        <div class="h-[27px] bg-[#282828] flex items-center pl-[29px] pt-[3px]"><svg class="w-[17px] h-[17px]"><use href="#box"/></svg><span class="ml-[9px]">Scene Collection</span></div>
        <div class="h-[24px] bg-[#2d2d2d] flex items-center relative pl-[32px] pt-[2px]">
          <svg class="w-[8px] h-[8px] text-[#cfcfcf]" viewBox="0 0 10 10"><path d="M0 1h10L5 9z" fill="currentColor"/></svg>
          <span class="ml-[16px] w-[13px] h-[13px] rounded-[2px] bg-[#d4d4d4] flex items-center justify-center"><svg class="w-[11px] h-[11px]" viewBox="0 0 12 12"><path d="M2 6l3 3 5-7" fill="none" stroke="#222" stroke-width="2"/></svg></span>
          <span class="ml-[6px] w-[24px] h-[22px] rounded-[5px] bg-[#555555] flex items-center justify-center"><svg class="w-[17px] h-[17px]"><use href="#box"/></svg></span>
          <span class="ml-[6px]">Collection</span>
          <svg class="w-[17px] h-[17px] ml-auto mr-[13px]"><use href="#eye"/></svg>
        </div>
        <div class="h-[26px] bg-[#282828] flex items-center relative pl-[78px] pt-[2px]">
          <span class="absolute left-[61px] top-[-7px] w-[17px] h-[20px] border-l border-b border-[#a0a0a0]"></span>
          <svg class="absolute left-[58px] top-[9px] w-[8px] h-[8px] text-[#cfcfcf]" viewBox="0 0 10 10"><path d="M1 0v10l8-5z" fill="currentColor"/></svg>
          <svg class="w-[19px] h-[19px] text-[#d8873f]"><use href="#camera"/></svg>
          <span class="ml-[8px] w-[76px]">Camera</span>
          <span class="w-[25px] h-[23px] rounded-[5px] bg-[#555555] flex items-center justify-center"><svg class="w-[19px] h-[19px] text-[#11b68d]"><use href="#camera-line"/></svg></span>
          <svg class="w-[17px] h-[17px] ml-auto mr-[13px]"><use href="#eye"/></svg>
        </div>
      </section>

      <!-- properties -->
      <section class="mt-[6px] flex-1 rounded-[6px] overflow-hidden flex flex-col relative">
        <div class="h-[30px] shrink-0 bg-[#3d3d3d] flex items-center pl-[10px]">
          <div class="w-[40px] h-[24px] rounded-[5px] bg-[#2b2b2b] flex items-center justify-center gap-[2px]"><svg class="w-[19px] h-[19px]"><use href="#toggles"/></svg><svg class="w-[9px] h-[9px]"><use href="#chev"/></svg></div>
          <svg class="w-[19px] h-[19px] ml-[15px]"><use href="#scene"/></svg>
          <span class="ml-[10px]">Scene</span>
          <svg class="w-[18px] h-[18px] ml-auto mr-[15px] text-[#7d7d7d]"><use href="#pin"/></svg>
        </div>
        <div class="flex-1 flex">
          <nav class="w-[35px] shrink-0 bg-[#282828] pt-[11px] pl-[2px] text-[#c8c8c8]">
            <div class="h-[34px] rounded-l-[5px] bg-[#303030] flex items-center justify-center"><svg class="w-[19px] h-[19px]"><use href="#tool"/></svg></div>
            <div class="h-[34px] mt-[10px] rounded-l-[5px] bg-[#303030] flex items-center justify-center"><svg class="w-[19px] h-[19px]"><use href="#render"/></svg></div>
            <div class="h-[34px] mt-px rounded-l-[5px] bg-[#303030] flex items-center justify-center"><svg class="w-[19px] h-[19px]"><use href="#output"/></svg></div>
            <div class="h-[34px] mt-px rounded-l-[5px] bg-[#303030] flex items-center justify-center"><svg class="w-[19px] h-[19px]"><use href="#layer"/></svg></div>
            <div class="h-[34px] mt-px rounded-l-[5px] bg-[#424242] flex items-center justify-center text-[#e0e0e0]"><svg class="w-[19px] h-[19px]"><use href="#scene"/></svg></div>
            <div class="h-[34px] mt-px rounded-l-[5px] bg-[#303030] flex items-center justify-center text-[#c9525f]"><svg class="w-[20px] h-[20px]"><use href="#world"/></svg></div>
            <div class="h-[34px] mt-[19px] rounded-l-[5px] bg-[#303030] flex items-center justify-center text-[#cf5263]"><svg class="w-[18px] h-[18px]"><use href="#checker"/></svg></div>
          </nav>
          <div class="flex-1 bg-[#424242]">
            <div class="h-[30px] bg-[#474747] flex items-center pl-[11px] pr-[11px] pt-px text-[14.4px] text-[#d2d2d2]">
              <svg class="w-[8px] h-[8px] text-[#a5a5a5]" viewBox="0 0 10 10"><path d="M0 1h10L5 9z" fill="currentColor"/></svg>
              <span class="ml-[8px]">Scene</span>
              <svg class="ml-auto w-[15px] h-[7px] text-[#a8a8a8]"><use href="#grip"/></svg>
            </div>
            <div class="h-[107px] bg-[#3a3a3a] pt-[10px] pl-[149px] flex flex-col gap-[8px] relative">
              <div class="h-[23px] rounded-[5px] w-[137px] bg-[#1d1d1d] flex items-center pl-[5px] text-[#d8d8d8]">
                <svg class="w-[18px] h-[18px]"><use href="#obj"/></svg><span class="ml-[8px]">Camera</span>
                <svg class="w-[11px] h-[11px] ml-auto mr-[5px]"><use href="#x"/></svg>
                <span class="absolute right-[160px] text-[#cfcfcf]">Camera</span>
              </div>
              <div class="h-[23px] rounded-[5px] w-[137px] bg-[#1d1d1d] flex items-center pl-[5px]">
                <svg class="w-[18px] h-[18px]"><use href="#scene"/></svg>
                <span class="absolute right-[160px] text-[#cfcfcf]">Background Scene</span>
              </div>
              <div class="h-[23px] rounded-[5px] w-[137px] bg-[#1d1d1d] flex items-center pl-[5px]">
                <svg class="w-[18px] h-[18px]"><use href="#clapper"/></svg>
                <span class="absolute right-[160px] text-[#cfcfcf]">Active Movie Clip</span>
              </div>
            </div>
            <div class="mt-[2px] text-[14.4px] text-[#c8c8c8]">
              <div class="h-[30px] flex items-center pl-[11px] pr-[11px]"><svg class="w-[8px] h-[8px] text-[#a5a5a5]" viewBox="0 0 10 10"><path d="M1 0v10l8-5z" fill="currentColor"/></svg><span class="ml-[8px]">Units</span><svg class="ml-auto w-[15px] h-[7px] text-[#a8a8a8]"><use href="#grip"/></svg></div>
              <div class="h-[30px] flex items-center pl-[11px] pr-[11px]"><svg class="w-[8px] h-[8px] text-[#a5a5a5]" viewBox="0 0 10 10"><path d="M1 0v10l8-5z" fill="currentColor"/></svg><span class="ml-[10px] w-[15px] h-[15px] rounded-[2px] bg-[#4772b3] flex items-center justify-center"><svg class="w-[12px] h-[12px]" viewBox="0 0 12 12"><path d="M2 6l3 3 5-7" fill="none" stroke="#fff" stroke-width="2"/></svg></span><span class="ml-[7px]">Gravity</span><svg class="ml-auto w-[15px] h-[7px] text-[#a8a8a8]"><use href="#grip"/></svg></div>
              <div class="h-[30px] flex items-center pl-[11px] pr-[11px]"><svg class="w-[8px] h-[8px] text-[#a5a5a5]" viewBox="0 0 10 10"><path d="M1 0v10l8-5z" fill="currentColor"/></svg><span class="ml-[8px]">Keying Sets</span><svg class="ml-auto w-[15px] h-[7px] text-[#a8a8a8]"><use href="#grip"/></svg></div>
              <div class="h-[30px] flex items-center pl-[11px] pr-[11px]"><svg class="w-[8px] h-[8px] text-[#a5a5a5]" viewBox="0 0 10 10"><path d="M1 0v10l8-5z" fill="currentColor"/></svg><span class="ml-[8px]">Audio</span><svg class="ml-auto w-[15px] h-[7px] text-[#a8a8a8]"><use href="#grip"/></svg></div>
              <div class="h-[30px] flex items-center pl-[11px] pr-[11px]"><svg class="w-[8px] h-[8px] text-[#a5a5a5]" viewBox="0 0 10 10"><path d="M1 0v10l8-5z" fill="currentColor"/></svg><span class="ml-[8px]">Rigid Body World</span><svg class="ml-auto w-[15px] h-[7px] text-[#a8a8a8]"><use href="#grip"/></svg></div>
              <div class="h-[30px] flex items-center pl-[11px] pr-[11px]"><svg class="w-[8px] h-[8px] text-[#a5a5a5]" viewBox="0 0 10 10"><path d="M1 0v10l8-5z" fill="currentColor"/></svg><span class="ml-[8px]">Custom Properties</span><svg class="ml-auto w-[15px] h-[7px] text-[#a8a8a8]"><use href="#grip"/></svg></div>
            </div>
          </div>
        </div>
        <!-- site watermark -->
        <div class="absolute left-[11px] top-[722px] flex items-center font-['Liberation_Sans',sans-serif] text-[#d4d4d4]">
          <div class="grid grid-cols-2 gap-px w-[48px] h-[48px]">
            <div class="bg-gradient-to-br from-[#1596cf] to-[#1b7fb2]"></div>
            <div class="bg-gradient-to-br from-[#e5b514] to-[#c9a022]"></div>
            <div class="bg-gradient-to-br from-[#e44f4f] to-[#c92222]"></div>
            <div class="bg-gradient-to-br from-[#3c3a80] to-[#1c1c58]"></div>
          </div>
          <span class="ml-[10px] text-[40px] font-bold tracking-[-0.5px] leading-none">OneProgs</span>
          <span class="text-[17px] font-bold self-start mt-[8px]">.com</span>
        </div>
      </section>
    </div>
  </div>

  <!-- status bar -->
  <div class="h-[25px] shrink-0 bg-[#2e2e2e] flex items-center text-[#a3a3a3] pl-[11px]">
    <svg class="w-[14px] h-[23px]"><use href="#mouse-l"/></svg><svg class="w-[8px] h-[14px] mb-[6px]" viewBox="0 0 8 14"><path d="M1 1c2 3 2 7 0 10M5 1v8" fill="none" stroke="currentColor"/></svg>
    <span class="ml-[9px] w-[284px]">Move</span>
    <svg class="w-[14px] h-[23px]"><use href="#mouse-m"/></svg>
    <span class="ml-[14px] w-[282px]">Pan View</span>
    <svg class="w-[14px] h-[23px]"><use href="#mouse-r"/></svg>
    <span class="ml-auto mr-[37px] text-[12.65px]">Collection | Verts:0 | Faces:0 | Tris:0 | Objects:0/1 | Mem: 22.3 MB | v2.80.75</span>
  </div>

  <script>
    const SVG_NS = 'http://www.w3.org/2000/svg';

    function addLine(parent, x1, y1, x2, y2, color) {
      const line = document.createElementNS(SVG_NS, 'line');
      line.setAttribute('x1', x1);
      line.setAttribute('y1', y1);
      line.setAttribute('x2', x2);
      line.setAttribute('y2', y2);
      if (color) line.setAttribute('stroke', color);
      parent.appendChild(line);
    }

    function addRulerLabels(id, labels) {
      const ruler = document.getElementById(id);
      labels.forEach(([text, x]) => {
        const label = document.createElement('span');
        label.className = 'absolute top-0 -translate-x-1/2 leading-[29px] text-[#c6c6c6]';
        label.style.left = x + 'px';
        label.textContent = text;
        ruler.appendChild(label);
      });
    }

    // dopesheet: frame range band and frame lines
    const dopeLines = document.getElementById('dope-lines');
    const band = document.createElementNS(SVG_NS, 'rect');
    band.setAttribute('x', 206);
    band.setAttribute('width', 119);
    band.setAttribute('height', 214);
    band.setAttribute('fill', '#434343');
    dopeLines.appendChild(band);
    for (let i = 0; i < 13; i++) {
      const x = Math.round(252 + i * 47.95) + 0.5;
      const inBand = x < 325;
      addLine(dopeLines, x, 0, x, 214, inBand ? '#303030' : (i % 2 ? '#111111' : '#1a1a1a'));
    }
    addLine(dopeLines, 205.5, 0, 205.5, 214, '#4772b3');
    dopeLines.lastChild.setAttribute('stroke-width', 2);
    addRulerLabels('dope-ruler', [200, 400, 600, 800, 1000, 1200].map((f, i) => [f, 300 + i * 95.9]));

    // graph: every 5 frames a line, the zero line across
    const graphLines = document.getElementById('graph-lines');
    for (let i = 1; i < 50; i++) {
      const x = Math.round(i * 31.7) + 0.5;
      addLine(graphLines, x, 0, x, 67, i % 2 ? '#2b2b2b' : '#1c1c1c');
    }
    addLine(graphLines, 0, 19.5, 1585, 19.5, '#141414');
    addLine(graphLines, 5.5, 0, 5.5, 67, '#4772b3');
    graphLines.lastChild.setAttribute('stroke-width', 2);
    const graphLabels = [];
    for (let f = 10; f <= 240; f += 10) graphLabels.push([f, f * 6.34]);
    addRulerLabels('graph-ruler', graphLabels);

    // 3d floor grid: lines run to the two vanishing points of the axes
    const origin = [1194, 224];
    const vpX = [570, -100];
    const vpY = [1937, -100];
    const depth = 20;
    const along = (vp, i) => {
      const t = i / (i + depth);
      return [origin[0] + t * (vp[0] - origin[0]), origin[1] + t * (vp[1] - origin[1])];
    };
    const drawFan = (group, from, to) => {
      for (let i = -18; i <= 100; i++) {
        const p = along(to, i);
        const end = [from[0] + (p[0] - from[0]) * 6, from[1] + (p[1] - from[1]) * 6];
        addLine(group, from[0], from[1], end[0], end[1]);
      }
    };
    ['grid-out', 'grid-in'].forEach(id => {
      const group = document.getElementById(id);
      drawFan(group, vpX, vpY);
      drawFan(group, vpY, vpX);
    });
  </script>
</body>
</html>
